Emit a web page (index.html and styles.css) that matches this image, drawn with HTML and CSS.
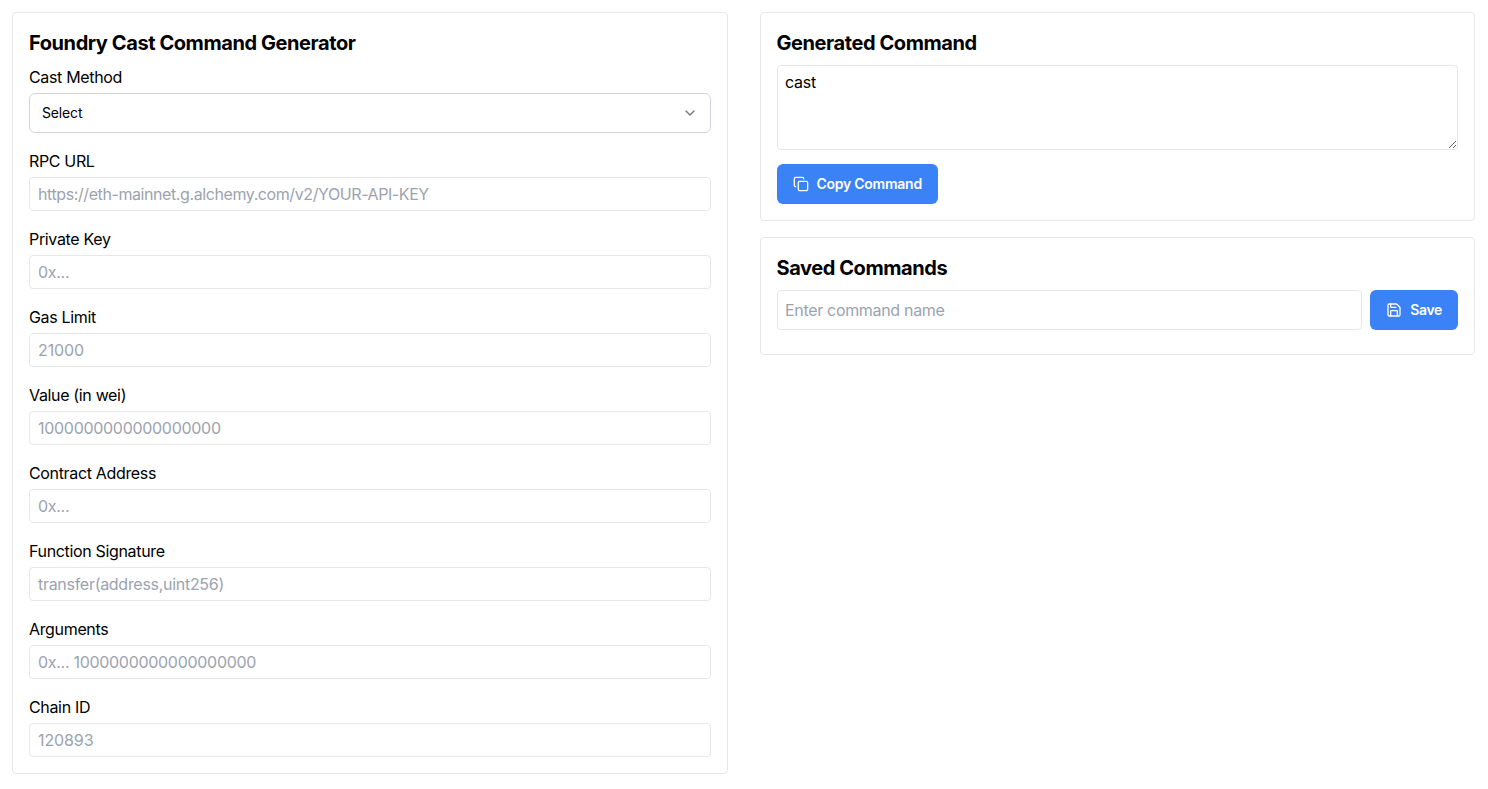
FILE: index.html
```html
<!DOCTYPE html>
<html lang="en">
<head>
<meta charset="utf-8">
<title>Foundry Cast Command Generator</title>
<link rel="stylesheet" href="styles.css">
</head>
<body>
<main class="page">
  <section class="card">
    <h2 class="title">Foundry Cast Command Generator</h2>
    <div class="field">
      <label class="label">Cast Method</label>
      <button class="select" type="button"><span>Select</span>
        <svg class="chevron" viewBox="0 0 24 24"><path d="m6 9 6 6 6-6"/></svg>
      </button>
    </div>
    <div class="field"><label class="label">RPC URL</label><input class="input url" placeholder="https://eth-mainnet.g.alchemy.com/v2/YOUR-API-KEY"></div>
    <div class="field"><label class="label">Private Key</label><input class="input" placeholder="0x..."></div>
    <div class="field"><label class="label">Gas Limit</label><input class="input number" placeholder="21000"></div>
    <div class="field"><label class="label">Value (in wei)</label><input class="input" placeholder="1000000000000000000"></div>
    <div class="field"><label class="label">Contract Address</label><input class="input" placeholder="0x..."></div>
    <div class="field"><label class="label">Function Signature</label><input class="input" placeholder="transfer(address,uint256)"></div>
    <div class="field"><label class="label">Arguments</label><input class="input" placeholder="0x... 1000000000000000000"></div>
    <div class="field"><label class="label">Chain ID</label><input class="input number" placeholder="120893"></div>
  </section>
  <div class="side">
    <section class="card">
      <h2 class="title">Generated Command</h2>
      <textarea class="output" readonly>cast </textarea>
      <button class="button copy" type="button">
        <svg class="icon" viewBox="0 0 24 24"><rect width="14" height="14" x="8" y="8" rx="2"/><path d="M4 16c-1.1 0-2-.9-2-2V4c0-1.1.9-2 2-2h10c1.1 0 2 .9 2 2"/></svg>
        <span>Copy Command</span>
      </button>
    </section>
    <section class="card saved">
      <h2 class="title">Saved Commands</h2>
      <div class="save-row">
        <input class="input name" placeholder="Enter command name">
        <button class="button save" type="button">
          <svg class="icon" viewBox="0 0 24 24"><path d="M15.2 3a2 2 0 0 1 1.4.6l3.8 3.8a2 2 0 0 1 .6 1.4V19a2 2 0 0 1-2 2H5a2 2 0 0 1-2-2V5a2 2 0 0 1 2-2z"/><path d="M17 21v-7a1 1 0 0 0-1-1H8a1 1 0 0 0-1 1v7"/><path d="M7 3v4a1 1 0 0 0 1 1h7"/></svg>
          <span>Save</span>
        </button>
      </div>
    </section>
  </div>
</main>
</body>
</html>
```
FILE: styles.css
```css
*, *::before, *::after { box-sizing: border-box; }
body { margin: 0; background: #fff; color: #000; font: 16px/24px Inter, sans-serif; }
button, input, textarea { font: inherit; color: inherit; margin: 0; }
.page { display: grid; grid-template-columns: 1fr 1fr; gap: 32px; padding: 12px 13px 12px 12px; align-items: start; }
.card { border: 1px solid #e5e7eb; border-radius: 4px; padding: 16px; }
.side { display: flex; flex-direction: column; gap: 16px; }
.title { margin: 0 0 8px; font-size: 20px; line-height: 28px; font-weight: 700; letter-spacing: -0.42px; }
.field { margin-bottom: 16px; }
.field:last-child { margin-bottom: 0; }
.label { display: block; height: 24px; margin-bottom: 4px; letter-spacing: -0.34px; }
.select { display: flex; width: 100%; height: 40px; align-items: center; justify-content: space-between; padding: 0 12px; border: 1px solid #d1d5db; border-radius: 6px; background: #fff; font-size: 14px; line-height: 20px; letter-spacing: -0.15px; }
.chevron { width: 16px; height: 16px; fill: none; stroke: #777; stroke-width: 2; stroke-linecap: round; stroke-linejoin: round; }
.input { display: block; width: 100%; height: 34px; padding: 4px 8px; border: 1px solid #e5e7eb; border-radius: 4px; background: #fff; letter-spacing: -0.29px; }
.input::placeholder { color: #9ca3af; opacity: 1; font-weight: 430; }
.url { letter-spacing: -0.41px; }
.number { letter-spacing: -0.1px; }
.output { display: block; width: 100%; height: 85px; padding: 4px 7.5px; border: 1px solid #e5e7eb; border-radius: 4px; letter-spacing: -0.27px; resize: vertical; }
.button { display: inline-flex; align-items: center; gap: 8px; height: 40px; padding: 0 16px; border: 0; border-radius: 6px; background: #3b82f6; color: #fff; font-size: 14px; line-height: 20px; font-weight: 600; letter-spacing: -0.26px; white-space: nowrap; }
.copy { margin-top: 14px; }
.icon { width: 16px; height: 16px; flex: none; fill: none; stroke: currentColor; stroke-width: 2; stroke-linecap: round; stroke-linejoin: round; }
.save { letter-spacing: -0.32px; }
.save-row { display: flex; gap: 8px; }
.save-row .name { flex: 1; width: auto; min-width: 0; height: 40px; padding: 4px 7.5px; letter-spacing: -0.32px; }
.saved { padding-bottom: 24px; }
```
